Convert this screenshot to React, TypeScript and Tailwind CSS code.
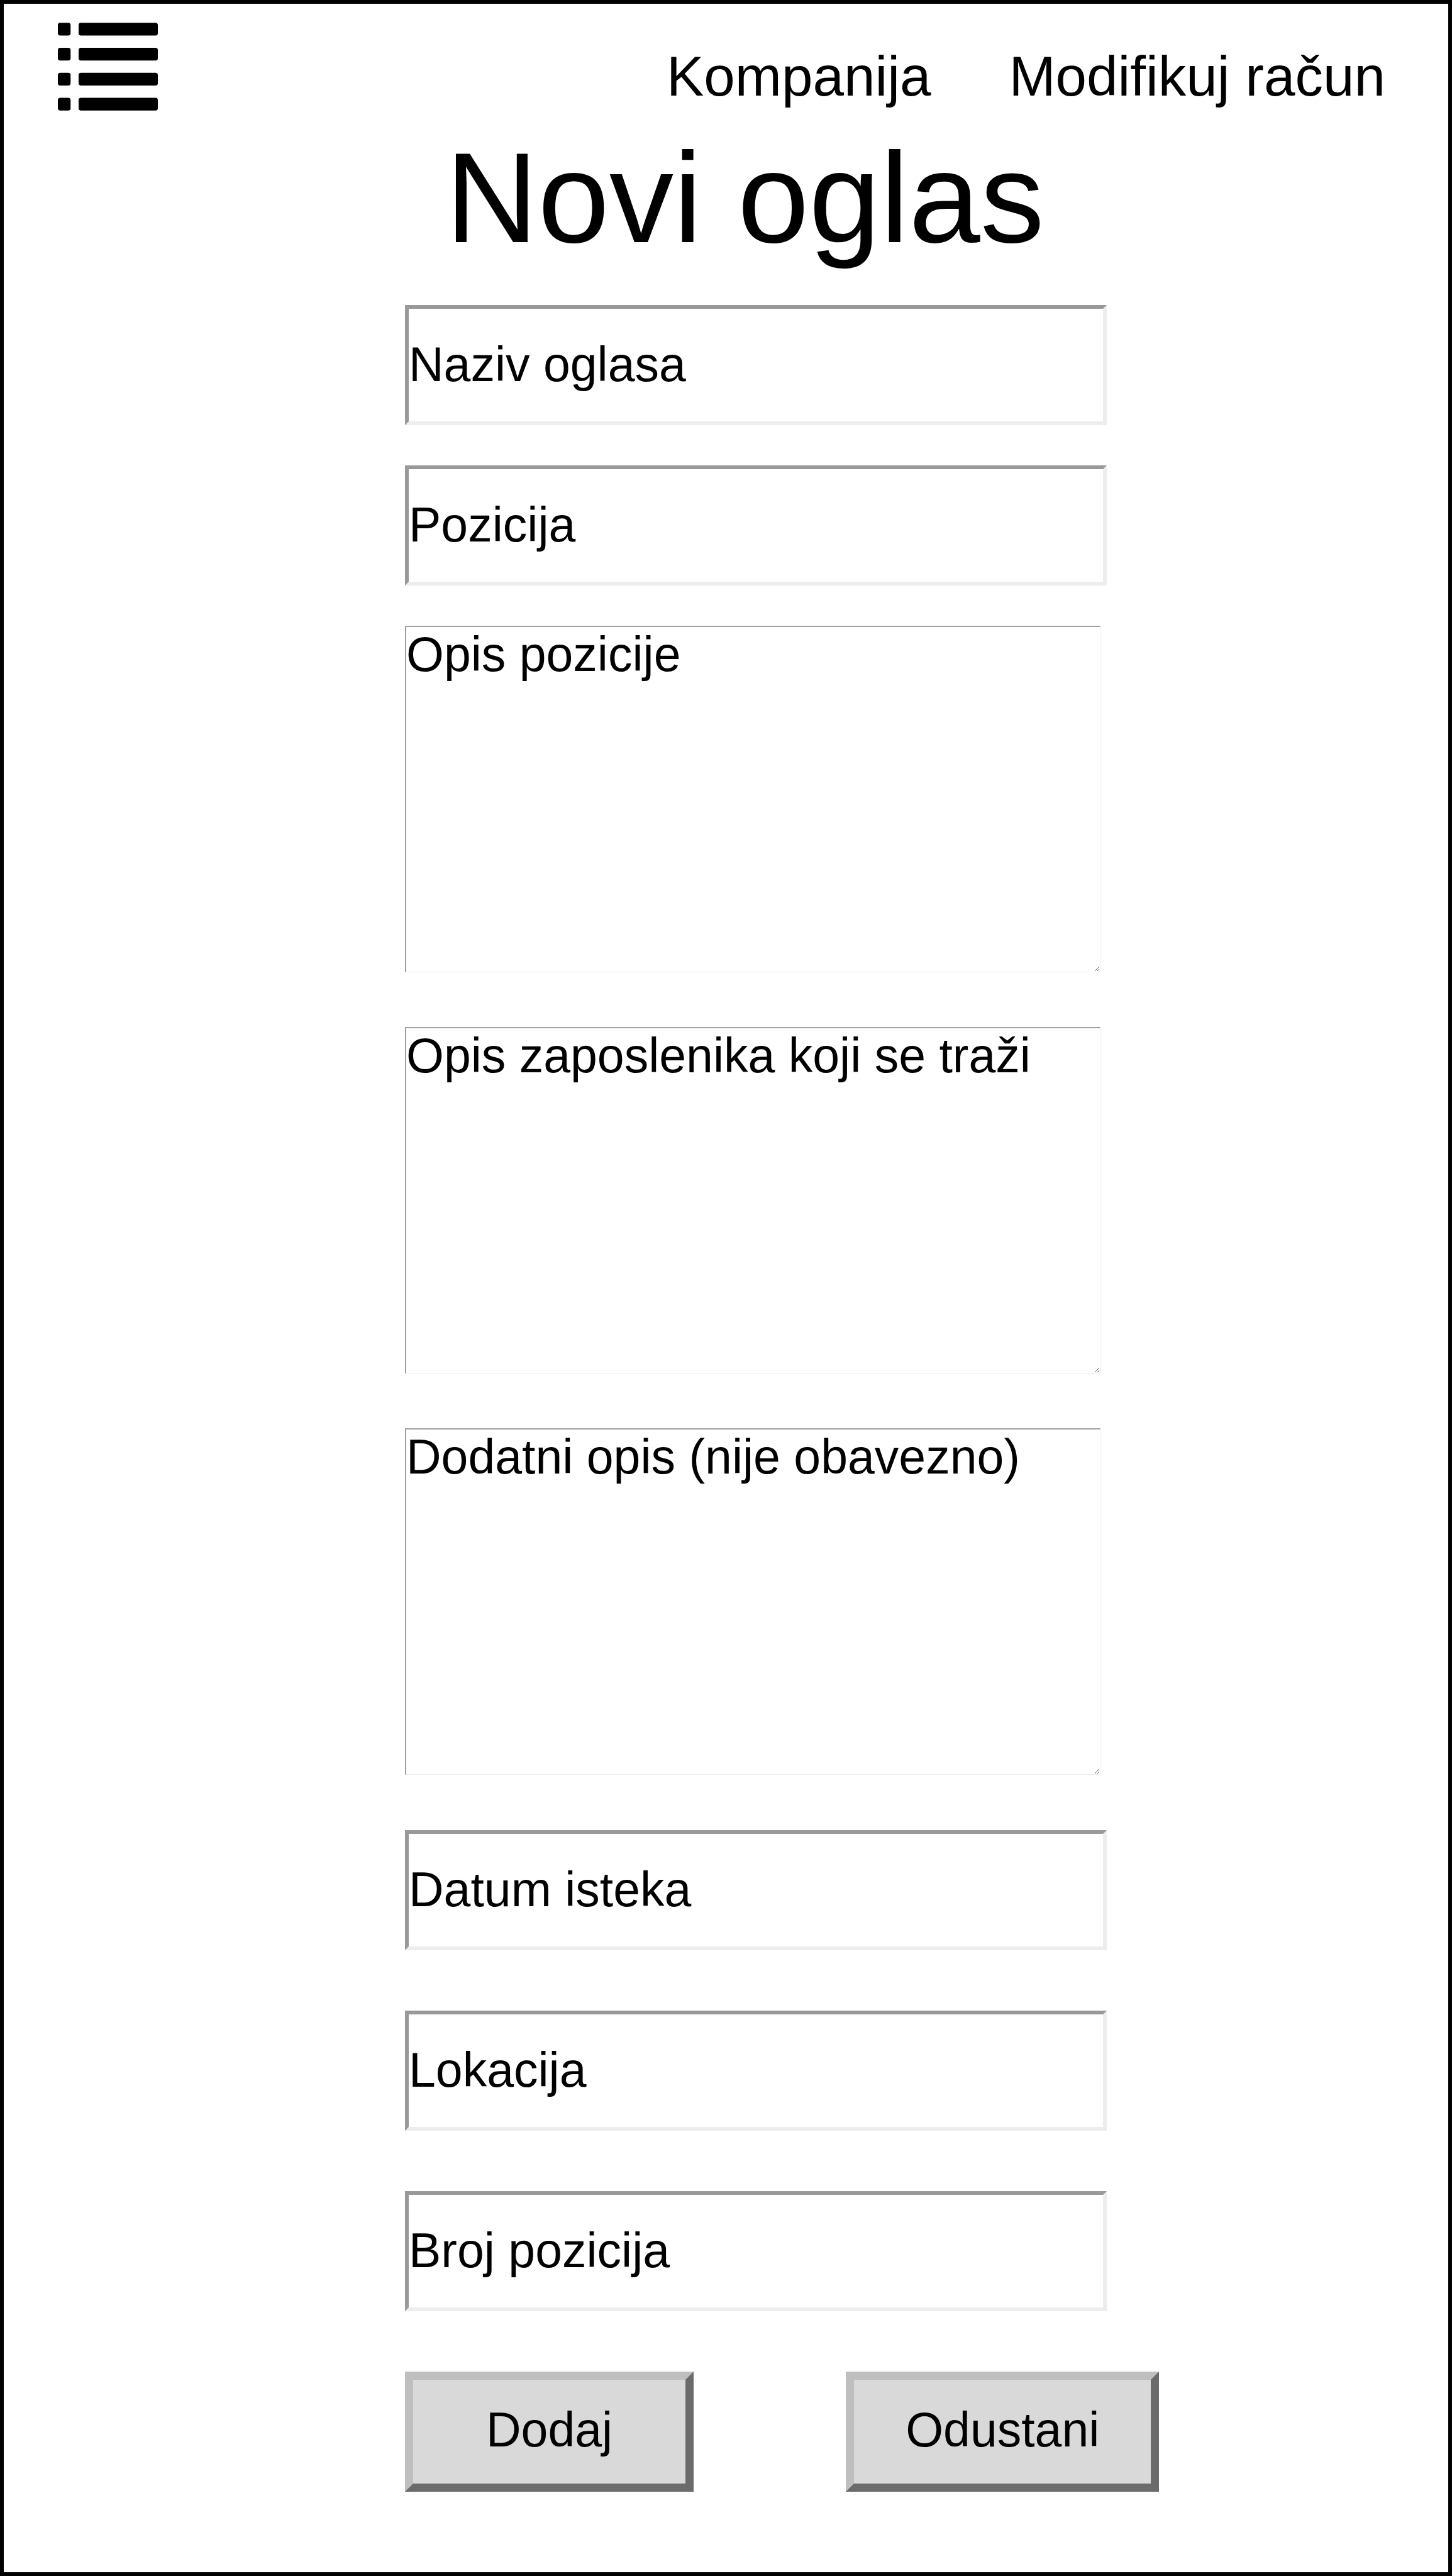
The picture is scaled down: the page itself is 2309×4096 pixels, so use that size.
import React, { useId } from "react";

function ListIcon() {
  return (
    <svg viewBox="0 0 212 186" className="h-[140px] w-[159px]" aria-hidden="true">
      {[0, 53, 106, 159].map((y) => (
        <g key={y}>
          <rect x="0" y={y} width="27" height="27" rx="5" />
          <rect x="44" y={y} width="168" height="27" rx="5" />
        </g>
      ))}
    </svg>
  );
}

function TextField({ label }: { label: string }) {
  const id = useId();
  return (
    <div>
      <label htmlFor={id} className="sr-only">{label}</label>
      <input
        id={id}
        type="text"
        defaultValue={label}
        className="block h-[191px] w-full border-6 border-t-[#999] border-l-[#999] border-r-[#ededed] border-b-[#ededed] bg-white pb-[2px] text-[77px] leading-[88px] outline-none"
      />
    </div>
  );
}

function TextArea({ label }: { label: string }) {
  const id = useId();
  return (
    <div className="pr-[10px]">
      <label htmlFor={id} className="sr-only">{label}</label>
      <textarea
        id={id}
        defaultValue={label}
        className="block h-[551px] w-full resize border-t-2 border-r border-b border-l-2 border-t-[#a0a0a0] border-l-[#a0a0a0] border-r-[#ededed] border-b-[#ededed] bg-white text-[77px] leading-[86px] outline-none"
      />
    </div>
  );
}

function BevelButton({ label }: { label: string }) {
  return (
    <button
      type="button"
      className="h-[191px] border-13 border-t-[#bfbfbf] border-l-[#bfbfbf] border-r-[#6b6b6b] border-b-[#6b6b6b] bg-[#d9d9d9] px-[82px] pb-[8px] text-[77px] leading-[88px] first:px-[116px]"
    >
      {label}
    </button>
  );
}

export default function App() {
  return (
    <div className="min-h-screen border-6 border-black bg-white font-['Liberation_Sans',Arial,sans-serif] text-black">
      <header className="flex items-start justify-between pt-[30px] pr-[100px] pl-[86px]">
        <button type="button" aria-label="Meni">
          <ListIcon />
        </button>
        <nav className="flex gap-[124px] pt-[35px] text-[89px] leading-[100px]">
          <a href="#kompanija">Kompanija</a>
          <a href="#racun">Modifikuj račun</a>
        </nav>
      </header>
      <h1 className="pt-[20px] pl-[60px] text-center text-[204px] leading-[236px]">Novi oglas</h1>
      <form className="mr-[543px] ml-[638px] flex flex-col pt-[53px]">
        <div className="flex flex-col gap-[64px]">
          <TextField label="Naziv oglasa" />
          <TextField label="Pozicija" />
        </div>
        <div className="flex flex-col gap-[87px] pt-[64px] pb-[88px]">
          <TextArea label="Opis pozicije" />
          <TextArea label="Opis zaposlenika koji se traži" />
          <TextArea label="Dodatni opis (nije obavezno)" />
        </div>
        <div className="flex flex-col gap-[96px]">
          <TextField label="Datum isteka" />
          <TextField label="Lokacija" />
          <TextField label="Broj pozicija" />
        </div>
        <div className="flex gap-[242px] pt-[96px] whitespace-nowrap">
          <BevelButton label="Dodaj" />
          <BevelButton label="Odustani" />
        </div>
      </form>
    </div>
  );
}
